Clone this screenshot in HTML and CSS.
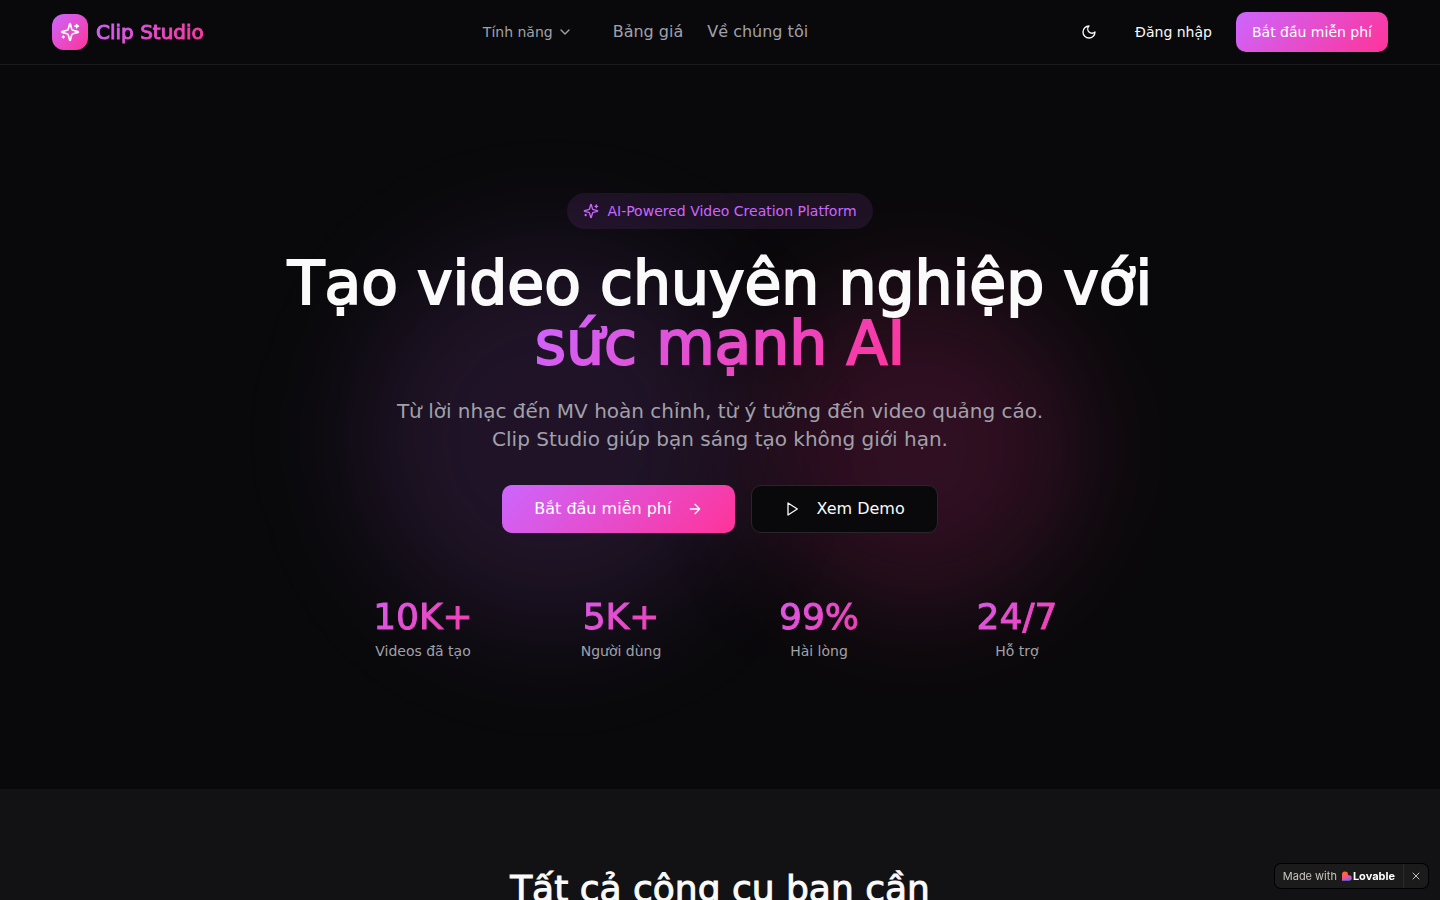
FILE: index.html
```
<!DOCTYPE html>
<html lang="vi">
<head>
    <meta charset="UTF-8">
    <meta name="viewport" content="width=device-width, initial-scale=1.0">
    <title>Clip Studio</title>
    <link rel="stylesheet" href="styles.css">
</head>
<body>
    <header class="header">
        <div class="container header-inner">
            <a class="logo" href="#">
                <span class="logo-icon">
                    <svg class="icon icon-md" viewBox="0 0 24 24"><path d="M9.937 15.5A2 2 0 0 0 8.5 14.063l-6.135-1.582a.5.5 0 0 1 0-.962L8.5 9.936A2 2 0 0 0 9.937 8.5l1.582-6.135a.5.5 0 0 1 .963 0L14.063 8.5A2 2 0 0 0 15.5 9.937l6.135 1.581a.5.5 0 0 1 0 .964L15.5 14.063a2 2 0 0 0-1.437 1.437l-1.582 6.135a.5.5 0 0 1-.963 0z"/><path d="M20 3v4M22 5h-4M4 17v2M5 18H3"/></svg>
                </span>
                <span class="logo-text gradient-text">Clip Studio</span>
            </a>

            <nav class="nav">
                <button class="nav-menu" type="button">Tính năng
                    <svg class="icon" viewBox="0 0 24 24"><path d="m6 9 6 6 6-6"/></svg>
                </button>
                <a href="#pricing">Bảng giá</a>
                <a href="#about">Về chúng tôi</a>
            </nav>

            <div class="actions">
                <button class="theme-toggle" type="button" aria-label="Đổi giao diện">
                    <svg class="icon" viewBox="0 0 24 24"><path d="M12 3a6 6 0 0 0 9 9 9 9 0 1 1-9-9Z"/></svg>
                </button>
                <a class="btn" href="#login">Đăng nhập</a>
                <a class="btn btn-primary" href="#signup">Bắt đầu miễn phí</a>
            </div>
        </div>
    </header>

    <main>
        <section class="hero">
            <div class="glow glow-purple"></div>
            <div class="glow glow-pink"></div>

            <div class="hero-content">
                <div class="badge">
                    <svg class="icon" viewBox="0 0 24 24"><path d="M9.937 15.5A2 2 0 0 0 8.5 14.063l-6.135-1.582a.5.5 0 0 1 0-.962L8.5 9.936A2 2 0 0 0 9.937 8.5l1.582-6.135a.5.5 0 0 1 .963 0L14.063 8.5A2 2 0 0 0 15.5 9.937l6.135 1.581a.5.5 0 0 1 0 .964L15.5 14.063a2 2 0 0 0-1.437 1.437l-1.582 6.135a.5.5 0 0 1-.963 0z"/><path d="M20 3v4M22 5h-4M4 17v2M5 18H3"/></svg>
                    <span>AI-Powered Video Creation Platform</span>
                </div>

                <h1>Tạo video chuyên nghiệp với <span class="gradient-text">sức mạnh AI</span></h1>

                <p class="lead">Từ lời nhạc đến MV hoàn chỉnh, từ ý tưởng đến video quảng cáo. Clip Studio giúp bạn sáng tạo không giới hạn.</p>

                <div class="cta">
                    <a class="btn btn-primary btn-lg" href="#signup">Bắt đầu miễn phí
                        <svg class="icon" viewBox="0 0 24 24"><path d="M5 12h14M12 5l7 7-7 7"/></svg>
                    </a>
                    <button class="btn btn-outline btn-lg" type="button">
                        <svg class="icon" viewBox="0 0 24 24"><path d="m6 3 14 9-14 9z"/></svg>
                        Xem Demo
                    </button>
                </div>

                <div class="stats">
                    <div class="stat">
                        <div class="stat-value gradient-text">10K+</div>
                        <div class="stat-label">Videos đã tạo</div>
                    </div>
                    <div class="stat">
                        <div class="stat-value gradient-text">5K+</div>
                        <div class="stat-label">Người dùng</div>
                    </div>
                    <div class="stat">
                        <div class="stat-value gradient-text">99%</div>
                        <div class="stat-label">Hài lòng</div>
                    </div>
                    <div class="stat">
                        <div class="stat-value gradient-text">24/7</div>
                        <div class="stat-label">Hỗ trợ</div>
                    </div>
                </div>
            </div>
        </section>

        <section class="features">
            <h2>Tất cả công cụ bạn cần</h2>
        </section>
    </main>

    <aside class="made-with">
        <a href="#lovable">Made with
            <span class="lovable">
                <svg class="heart" viewBox="0 0 20 20">
                    <defs>
                        <linearGradient id="heart-fill" x1="0.3" y1="0" x2="0.6" y2="1">
                            <stop offset="0.2" stop-color="#ff6a2a"/>
                            <stop offset="0.55" stop-color="#ff4f8a"/>
                            <stop offset="1" stop-color="#6a6cff"/>
                        </linearGradient>
                    </defs>
                    <path fill="url(#heart-fill)" d="M6 1a6 6 0 0 1 6 6v1.500h2a5.500 5.500 0 0 1 0 11H0V7a6 6 0 0 1 6-6z"/>
                </svg>
                Lovable
            </span>
        </a>
        <button type="button" aria-label="Đóng">
            <svg class="icon icon-xs" viewBox="0 0 24 24"><path d="M18 6 6 18M6 6l12 12"/></svg>
        </button>
    </aside>
</body>
</html>
```
FILE: styles.css
```
* {
    box-sizing: border-box;
}

body {
    margin: 0;
    font-family: "DejaVu Sans", sans-serif;
    font-size: 16px;
    line-height: 24px;
    background: #09090b;
    color: #fafafa;
}

h1, h2, p {
    margin: 0;
}

a {
    color: inherit;
    text-decoration: none;
}

button {
    font: inherit;
    color: inherit;
    background: none;
    border: none;
    padding: 0;
    cursor: pointer;
}

.icon {
    width: 16px;
    height: 16px;
    flex-shrink: 0;
    fill: none;
    stroke: currentColor;
    stroke-width: 2;
    stroke-linecap: round;
    stroke-linejoin: round;
}

.icon-md {
    width: 20px;
    height: 20px;
}

.icon-xs {
    width: 12px;
    height: 12px;
}

.gradient-text {
    background: linear-gradient(135deg, #cc66ff, #ff3399);
    -webkit-background-clip: text;
    background-clip: text;
    color: transparent;
}

.container {
    max-width: 1400px;
    margin: 0 auto;
    padding: 0 32px;
}

/* Header */
.header {
    border-bottom: 1px solid #1b1b1f;
}

.header-inner {
    display: flex;
    align-items: center;
    justify-content: space-between;
    height: 64px;
}

.logo {
    display: flex;
    align-items: center;
    gap: 8px;
}

.logo-icon {
    display: flex;
    align-items: center;
    justify-content: center;
    width: 36px;
    height: 36px;
    border-radius: 12px;
    background: linear-gradient(135deg, #cc66ff, #ff3399);
    color: #fff;
}

.logo-text {
    font-size: 20px;
    line-height: 28px;
    -webkit-text-stroke: 1px transparent;
}

.nav {
    display: flex;
    align-items: center;
    gap: 24px;
    margin-left: 4px;
    color: #a1a1aa;
}

.nav-menu {
    display: flex;
    align-items: center;
    gap: 4px;
    padding: 8px 16px;
    font-size: 14px;
    line-height: 20px;
}

.actions {
    display: flex;
    align-items: center;
    gap: 8px;
}

.theme-toggle {
    display: flex;
    align-items: center;
    justify-content: center;
    width: 44px;
    height: 40px;
}

.btn {
    display: inline-flex;
    align-items: center;
    justify-content: center;
    gap: 8px;
    height: 40px;
    padding: 0 16px;
    border-radius: 10px;
    font-size: 14px;
    line-height: 20px;
    white-space: nowrap;
}

.btn-primary {
    background: linear-gradient(135deg, #cc66ff, #ff3399);
    color: #fff;
}

.btn-outline {
    background: #09090b;
    border: 1px solid #27272a;
}

.btn-lg {
    gap: 16px;
    height: 48px;
    padding: 0 32px;
    font-size: 16px;
    line-height: 24px;
}

/* Hero */
.hero {
    position: relative;
    overflow: hidden;
    padding: 128px 32px;
}

.glow {
    position: absolute;
    border-radius: 50%;
    filter: blur(58px);
}

.glow-purple {
    top: 25%;
    left: 25%;
    width: 384px;
    height: 384px;
    background: rgba(204, 102, 255, 0.12);
}

.glow-pink {
    right: 25%;
    bottom: 25%;
    width: 320px;
    height: 320px;
    background: rgba(255, 51, 153, 0.16);
}

.hero-content {
    position: relative;
    display: flex;
    flex-direction: column;
    align-items: center;
    max-width: 896px;
    margin: 0 auto;
    text-align: center;
}

.badge {
    display: flex;
    align-items: center;
    gap: 8px;
    padding: 8px 16px;
    margin-bottom: 24px;
    border-radius: 18px;
    background: rgba(204, 102, 255, 0.1);
    color: #cc66ff;
    font-size: 14px;
    line-height: 20px;
}

h1 {
    margin-bottom: 24px;
    font-size: 60px;
    line-height: 60px;
    font-weight: 400;
    -webkit-text-stroke: 2px #fafafa;
}

h1 .gradient-text {
    -webkit-text-stroke-color: transparent;
}

.lead {
    max-width: 672px;
    margin-bottom: 32px;
    color: #a1a1aa;
    font-size: 20px;
    line-height: 28px;
}

.cta {
    display: flex;
    gap: 16px;
    margin-bottom: 64px;
}

.stats {
    display: grid;
    grid-template-columns: repeat(4, 1fr);
    gap: 24px;
    width: 100%;
    max-width: 768px;
}

.stat-value {
    margin-bottom: 4px;
    font-size: 36px;
    line-height: 40px;
    -webkit-text-stroke: 1px transparent;
}

.stat-label {
    color: #a1a1aa;
    font-size: 14px;
    line-height: 20px;
}

/* Features */
.features {
    padding: 80px 32px;
    background: #121214;
    text-align: center;
}

h2 {
    font-size: 36px;
    line-height: 40px;
    font-weight: 400;
    -webkit-text-stroke: 1px #fafafa;
}

/* Badge in the page corner */
.made-with {
    position: fixed;
    right: 12px;
    bottom: 12px;
    display: flex;
    height: 24px;
    border-radius: 6px;
    background: #1b1b1b;
    box-shadow: 0 0 0 1px #000;
    color: #c8c5bd;
    font-family: Inter, sans-serif;
    font-size: 11px;
    line-height: 24px;
}

.made-with a {
    display: flex;
    gap: 5px;
    padding: 0 8px;
}

.made-with button {
    display: flex;
    align-items: center;
    justify-content: center;
    width: 25px;
    border-left: 1px solid #2a2a2a;
}

.lovable {
    display: flex;
    align-items: center;
    gap: 1px;
    color: #fff;
    font-weight: 700;
}

.heart {
    width: 10px;
    height: 10px;
}
```
